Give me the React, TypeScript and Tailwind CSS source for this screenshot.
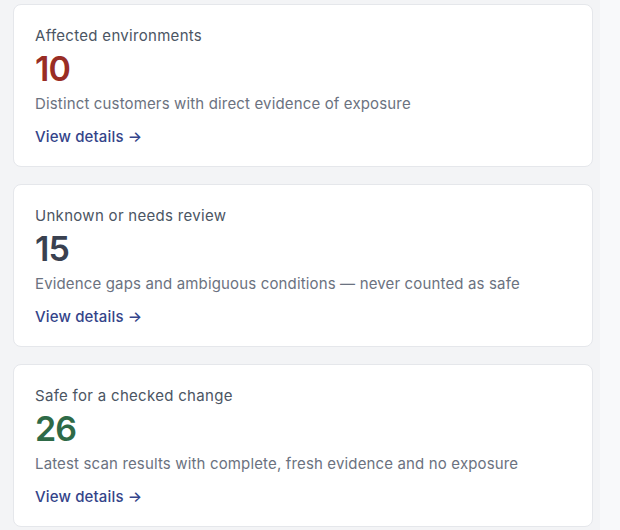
import React from 'react';

interface StatCardProps {
  title: string;
  value: number;
  valueClass: string;
  description: string;
}

const StatCard: React.FC<StatCardProps> = ({ title, value, valueClass, description }) => {
  return (
    <div className="bg-white rounded-lg border border-[#e5e7eb] h-[163px] px-[21px] pt-[21px]">
      <h3 className="text-[15px] leading-[20px] tracking-[0.3px] text-[#4b5563]">{title}</h3>
      <div className={`text-[34px] leading-[40px] font-semibold tracking-tight mt-[3px] ${valueClass}`}>{value}</div>
      <p className="text-[15px] leading-[20px] tracking-[0.15px] text-[#6b7280] mt-[5px]">{description}</p>
      <a href="#" className="inline-block mt-[13px] text-[15px] leading-[20px] tracking-[0.15px] font-medium text-[#34448a]">
        View details →
      </a>
    </div>
  );
};

const CARDS: StatCardProps[] = [
  {
    title: 'Affected environments',
    value: 10,
    valueClass: 'text-[#992d25]',
    description: 'Distinct customers with direct evidence of exposure',
  },
  {
    title: 'Unknown or needs review',
    value: 15,
    valueClass: 'text-[#3a4150]',
    description: 'Evidence gaps and ambiguous conditions — never counted as safe',
  },
  {
    title: 'Safe for a checked change',
    value: 26,
    valueClass: 'text-[#2e6a47]',
    description: 'Latest scan results with complete, fresh evidence and no exposure',
  },
];

export default function App() {
  return (
    <div className="min-h-screen bg-[#f8f9fa] flex" style={{ fontFamily: 'Inter, "Noto Sans", sans-serif' }}>
      <div className="w-[600px] bg-[#f3f4f6] pl-[13px] pr-[7px] pt-[4px] flex flex-col gap-[17px]">
        {CARDS.map((c) => (
          <StatCard key={c.title} {...c} />
        ))}
      </div>
    </div>
  );
}
